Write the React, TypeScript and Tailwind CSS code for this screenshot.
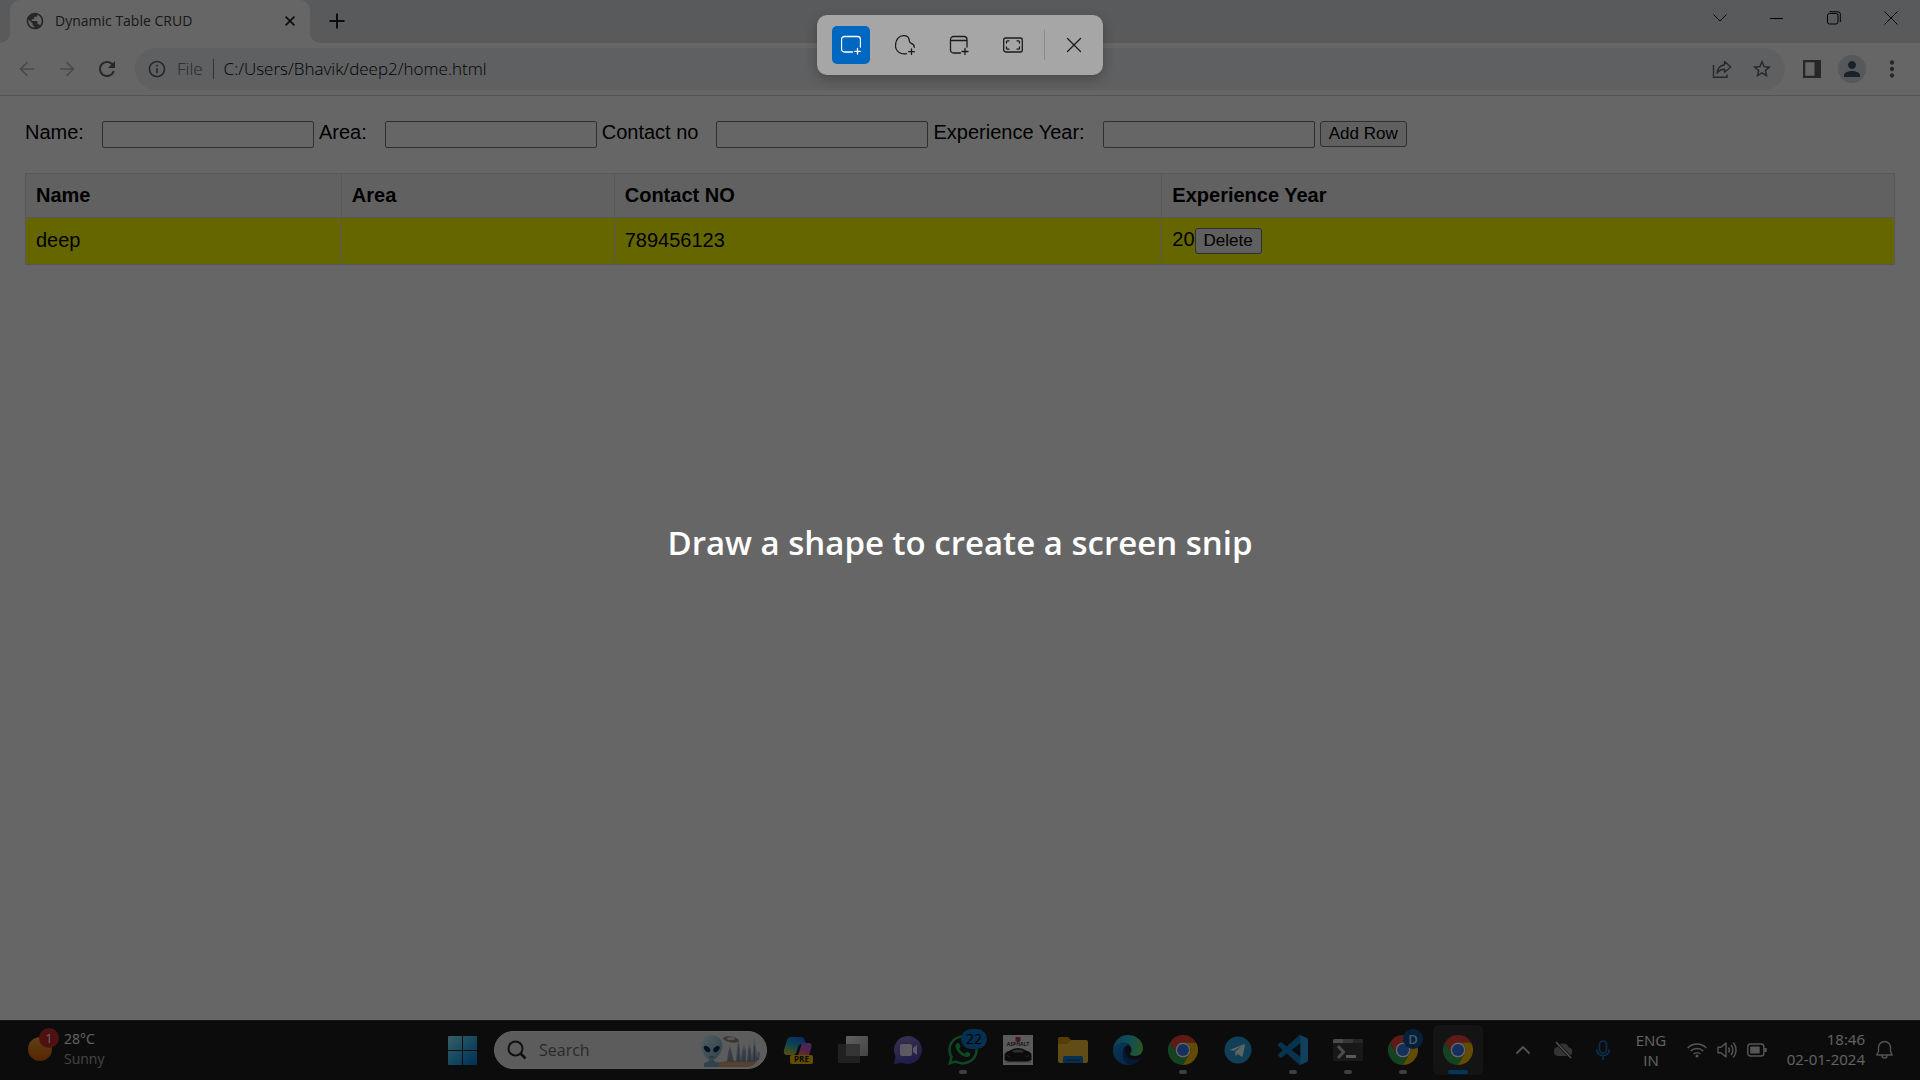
import React from "react";
import { ArrowLeft, ArrowRight, ChevronUp } from "lucide-react";
import { MdInfoOutline, MdMoreVert, MdPerson, MdPublic, MdRefresh, MdStarBorder } from "react-icons/md";
import { FaWhatsapp } from "react-icons/fa";

type Kids = { children?: React.ReactNode };

/* ---------- Browser chrome ---------- */

function WindowButton({ label, children }: Kids & { label: string }) {
  return (
    <button aria-label={label} className="flex h-9 w-[57px] items-center justify-center text-black">
      {children}
    </button>
  );
}

function TabStrip() {
  return (
    <header className="flex h-[43px] bg-white">
      <div className="w-[10px] rounded-br-[10px] bg-[#dee1e6]" />
      <div className="bg-[#dee1e6]">
        <div className="flex h-full w-[300px] items-center rounded-t-[10px] bg-white pr-3 pb-0.5 pl-[15px]">
          <MdPublic className="size-5 text-[#5f6368]" />
          <span className="ml-[10px] flex-1 text-[14px] leading-5 text-[#3c4043]">Dynamic Table CRUD</span>
          <button aria-label="Close tab" className="flex size-4 items-center justify-center text-[#202124]">
            <svg viewBox="0 0 10 10" className="size-[10px]" stroke="currentColor" strokeWidth="1.7">
              <path d="M.6.6l8.8 8.8M9.4.6L.6 9.4" />
            </svg>
          </button>
        </div>
      </div>
      <div className="flex flex-1 justify-between rounded-bl-[10px] bg-[#dee1e6] pr-px">
        <button aria-label="New tab" className="ml-[13px] flex h-[42px] w-7 items-center justify-center text-[#202124]">
          <svg viewBox="0 0 16 16" className="size-4" stroke="currentColor" strokeWidth="2">
            <path d="M8 .5v15M.5 8h15" />
          </svg>
        </button>
        <div className="flex">
          <WindowButton label="Search tabs">
            <svg viewBox="0 0 14 8" className="h-2 w-[14px]" fill="none" stroke="currentColor">
              <path d="M.5.5L7 7 13.5.5" />
            </svg>
          </WindowButton>
          <WindowButton label="Minimize">
            <span className="h-px w-[13px] bg-black" />
          </WindowButton>
          <WindowButton label="Restore">
            <svg viewBox="0 0 14 14" className="size-[14px]" fill="none" stroke="currentColor">
              <rect x=".5" y="2.5" width="10.5" height="10.5" rx="2" />
              <path d="M2.5.8H11a2.3 2.3 0 0 1 2.3 2.3V11" />
            </svg>
          </WindowButton>
          <WindowButton label="Close">
            <svg viewBox="0 0 14 14" className="size-[14px]" fill="none" stroke="currentColor">
              <path d="M.5.5l13 13M13.5.5l-13 13" />
            </svg>
          </WindowButton>
        </div>
      </div>
    </header>
  );
}

function ToolButton({ label, children }: Kids & { label: string }) {
  return (
    <button aria-label={label} className="flex h-10 w-10 items-center justify-center text-[#5f6368]">
      {children}
    </button>
  );
}

function Toolbar() {
  return (
    <nav className="flex h-[53px] items-center border-b border-[#d0d2d5] bg-white px-2">
      <div className="-ml-px flex">
        <ToolButton label="Back">
          <ArrowLeft className="size-[22px] text-[#b4b6b9]" strokeWidth={1.8} />
        </ToolButton>
        <ToolButton label="Forward">
          <ArrowRight className="size-[22px] text-[#b4b6b9]" strokeWidth={1.8} />
        </ToolButton>
        <ToolButton label="Reload">
          <MdRefresh className="size-6" />
        </ToolButton>
      </div>
      <div className="ml-2 flex h-[42px] flex-1 items-center rounded-full bg-[#edf0f4] pr-[3px] pl-3">
        <MdInfoOutline className="size-5 text-[#5f6368]" />
        <span className="ml-[10px] text-[17px] leading-6 font-light text-[#5f6368]">File</span>
        <span className="mx-[10px] h-5 w-px bg-[#777b80]" />
        <input
          aria-label="Address"
          defaultValue="C:/Users/Bhavik/deep2/home.html"
          className="min-w-0 flex-1 bg-transparent text-[17px] leading-6 font-light text-black outline-none"
        />
        <ToolButton label="Share">
          <svg viewBox="0 0 20 20" className="size-5" fill="none" stroke="currentColor" strokeWidth="1.4">
            <path d="M1.5 6v12.3H15V15.500" />
            <path d="M12.500 2.500L18.800 8l-6.300 5.300V10.300C9.200 10.300 7 11.500 5 14.300c.4-4.500 3-7.800 7.500-8.600z" strokeLinejoin="round" />
          </svg>
        </ToolButton>
        <ToolButton label="Bookmark">
          <MdStarBorder className="size-[22px]" />
        </ToolButton>
      </div>
      <div className="ml-[7px] flex">
        <ToolButton label="Side panel">
          <svg viewBox="0 0 18 18" className="size-[18px]" fill="currentColor">
            <path fillRule="evenodd" d="M0 0h18v18H0zM2.300 2.300v13.400h9.200V2.300z" />
          </svg>
        </ToolButton>
        <ToolButton label="Profile">
          <span className="flex size-7 items-center justify-center rounded-full bg-[#d8dce2]">
            <MdPerson className="size-6 text-[#45536a]" />
          </span>
        </ToolButton>
        <ToolButton label="Menu">
          <MdMoreVert className="size-[26px]" />
        </ToolButton>
      </div>
    </nav>
  );
}

/* ---------- Page ---------- */

function Field({ id, label }: { id: string; label: string }) {
  return (
    <div className="flex items-baseline gap-[18px]">
      <label htmlFor={id}>{label}</label>
      <input id={id} className="h-[27px] w-[212px] rounded-[2px] border border-[#767676] bg-white px-1 text-[17px]" />
    </div>
  );
}

function PageButton({ children }: Kids) {
  return (
    <button className="rounded-[3px] border border-[#767676] bg-[#efefef] px-2 text-[17px] leading-6 text-black">
      {children}
    </button>
  );
}

const columns = [
  { name: "Name", width: "w-[16.9%]" },
  { name: "Area", width: "w-[14.6%]" },
  { name: "Contact NO", width: "w-[29.3%]" },
  { name: "Experience Year", width: "w-[39.2%]" },
];

function Page() {
  return (
    <main className="flex-1 bg-white px-[25px] pt-6 font-['Liberation_Sans',Arial,sans-serif] text-[20px] leading-6 text-black">
      <form className="flex items-baseline gap-[5px]" onSubmit={(e) => e.preventDefault()}>
        <Field id="name" label="Name:" />
        <Field id="area" label="Area:" />
        <Field id="contact" label="Contact no" />
        <Field id="experience" label="Experience Year:" />
        <PageButton>Add Row</PageButton>
      </form>
      <table className="mt-[25px] w-full table-fixed border-collapse text-left">
        <thead>
          <tr className="bg-[#f2f2f2]">
            {columns.map((c) => (
              <th key={c.name} className={`border border-[#dddddd] px-[10px] pt-[9px] pb-[10px] leading-6 font-bold ${c.width}`}>
                {c.name}
              </th>
            ))}
          </tr>
        </thead>
        <tbody>
          <tr className="bg-[#ffff00]">
            <td className="h-[47px] border border-[#dddddd] px-[10px] pb-0.5">deep</td>
            <td className="border border-[#dddddd] px-[10px]" />
            <td className="border border-[#dddddd] px-[10px] pb-0.5">789456123</td>
            <td className="border border-[#dddddd] px-[10px]">
              <div className="flex items-baseline">
                20<PageButton>Delete</PageButton>
              </div>
            </td>
          </tr>
        </tbody>
      </table>
    </main>
  );
}

/* ---------- Taskbar icons ---------- */

function StartIcon() {
  return (
    <svg viewBox="0 0 29 29" className="size-[29px]">
      <defs>
        <linearGradient id="start" x1="0" y1="0" x2="1" y2="1">
          <stop offset="0" stopColor="#8eeaff" />
          <stop offset=".5" stopColor="#39b8ee" />
          <stop offset="1" stopColor="#0078d4" />
        </linearGradient>
      </defs>
      <path fill="url(#start)" d="M1 0h13v14H0V1a1 1 0 0 1 1-1zM15 0h13a1 1 0 0 1 1 1v13H15zM0 15h14v14H1a1 1 0 0 1-1-1zM15 15h14v13a1 1 0 0 1-1 1H15z" />
    </svg>
  );
}

function AlienArt() {
  return (
    <svg viewBox="0 0 62 36" className="h-9 w-[62px]">
      <defs>
        <linearGradient id="skin" x1="0" y1="0" x2="1" y2="1">
          <stop offset="0" stopColor="#d3eef5" />
          <stop offset="1" stopColor="#6fa3b8" />
        </linearGradient>
        <linearGradient id="tower" x1="0" y1="0" x2="0" y2="1">
          <stop offset="0" stopColor="#cdd6dc" />
          <stop offset="1" stopColor="#7d90a8" />
        </linearGradient>
      </defs>
      <path fill="#d1a277" d="M14 31q20-4 43-2-3 5-9 6H5z" />
      <path fill="url(#tower)" d="M27 30l1-9 2-8 2 8 2 9zM36 30l1-14 1.500-10L40 16l1 14zM41 30l1-12 2-6 2 6v12zM47 30l1-13 1.500-6L51 17l1 13zM52 30l1-15 1.500-10L56 15l1.500 14zM57 28l1-9 2 2-1 7z" />
      <path stroke="#536a85" strokeWidth=".5" d="M30 17v12M38.500 12v17M44 18v11M49.500 17v12M54.500 14v15" />
      <ellipse cx="31" cy="7.500" rx="8" ry="3" fill="#978b86" transform="rotate(10 31 8)" />
      <ellipse cx="31" cy="6.500" rx="4" ry="1.600" fill="#ded7d3" />
      <path fill="#7eabba" d="M9 24h5v5l5 2v4H4v-4l5-2z" />
      <path fill="url(#skin)" d="M11.500 3C4 3 1 8.500 1 14c0 6 6 14.500 10.500 14.500S22.500 20 22.500 14C22.500 8.500 19 3 11.500 3z" />
      <ellipse cx="7" cy="17" rx="2.400" ry="3.800" fill="#142c50" transform="rotate(-45 7 17)" />
      <ellipse cx="16.500" cy="17" rx="2.400" ry="3.800" fill="#142c50" transform="rotate(45 16.500 17)" />
      <path d="M9.500 25h4" stroke="#476b7a" />
    </svg>
  );
}

function CopilotIcon() {
  return (
    <svg viewBox="0 0 30 30" className="size-[30px]">
      <defs>
        <linearGradient id="cpA" x1=".6" y1="0" x2=".2" y2="1">
          <stop offset="0" stopColor="#1a72e8" />
          <stop offset=".5" stopColor="#22b0c9" />
          <stop offset=".8" stopColor="#9bc04a" />
          <stop offset="1" stopColor="#f0b429" />
        </linearGradient>
        <linearGradient id="cpB" x1=".6" y1="0" x2=".3" y2="1">
          <stop offset="0" stopColor="#a560f5" />
          <stop offset=".6" stopColor="#e0559d" />
          <stop offset="1" stopColor="#f58c50" />
        </linearGradient>
      </defs>
      <path fill="url(#cpA)" d="M8 2h10q3 0 4 4l1 3h-4q-3 0-4 3l-2 6q-1 2-3 2H4q-4 0-3-5L4 5q1-3 4-3z" />
      <path fill="url(#cpB)" d="M19 8h7q3 0 2.500 4l-2 7q-1 3-4 3H13q2-1 3-4l2-7q0-2 1-3z" />
      <rect x="7" y="20" width="23" height="9" rx="2" fill="#f5c400" />
      <text x="18.500" y="27.400" textAnchor="middle" fontSize="8" fontWeight="700" fill="#181818" fontFamily="Open Sans">PRE</text>
    </svg>
  );
}

function TaskViewIcon() {
  return (
    <svg viewBox="0 0 30 30" className="size-[30px]">
      <defs>
        <linearGradient id="tv" x1="0" y1="0" x2="1" y2="1">
          <stop offset="0" stopColor="#f0f0f0" />
          <stop offset="1" stopColor="#a9a9a9" />
        </linearGradient>
      </defs>
      <rect x="8" y="1" width="22" height="20" rx="1" fill="url(#tv)" />
      <rect y="9" width="22" height="19" rx="1" fill="#545454" />
      <path d="M8 9h14v12H8z" fill="#858585" />
    </svg>
  );
}

function ChatIcon() {
  return (
    <svg viewBox="0 0 30 30" className="size-[30px]">
      <defs>
        <linearGradient id="chat" x1=".2" y1="0" x2=".6" y2="1">
          <stop offset="0" stopColor="#8f7ac8" />
          <stop offset="1" stopColor="#4a45b8" />
        </linearGradient>
      </defs>
      <path fill="url(#chat)" d="M15 1a14 14 0 1 1-6 26.700L1 29l1.500-7.500A14 14 0 0 1 15 1z" />
      <rect x="7" y="9" width="12" height="12" rx="2" fill="#e6e2f0" />
      <path fill="#e6e2f0" d="M20 13l4-3v10l-4-3z" />
    </svg>
  );
}

function AsphaltIcon() {
  return (
    <svg viewBox="0 0 30 30" className="size-[30px]">
      <path fill="#e4e4e4" d="M0 0h30v30H0z" />
      <path fill="#ad3551" d="M12.500 2h5v4L15 7.500 12.500 6z" />
      <text x="15" y="11.300" textAnchor="middle" fontSize="5" fontWeight="700" fill="#333" fontFamily="Open Sans">ASPHALT</text>
      <path fill="#bcbcbc" d="M2 22h26v6H2z" />
      <path fill="#1d1d1d" d="M1.500 19.500q1-3 5.500-4 3-2.500 8-2.500t8 2.500q4.500 1 5.500 4v5.500l-4 1.500h-19l-4-1.500z" />
      <path fill="#777" d="M9 16q6-3 12 0l-2 1.500h-8zM3 20l5 1.500H5zM27 20l-5 1.500h3z" />
    </svg>
  );
}

function FolderIcon() {
  return (
    <svg viewBox="0 0 30 30" className="size-[30px]">
      <path fill="#d99a0b" d="M0 4q0-2 2-2h8l3 3h13v6H0z" />
      <path fill="#f3bd35" d="M0 9h9l4-4h15q2 0 2 2v19q0 2-2 2H2q-2 0-2-2z" />
      <path fill="#0f76c8" d="M5 28v-5q0-2 2-2h16q2 0 2 2v5z" />
      <path stroke="#0a4c8c" strokeWidth="1.200" d="M8 25h14" />
    </svg>
  );
}

function EdgeIcon() {
  return (
    <svg viewBox="0 0 30 30" className="size-[30px]">
      <defs>
        <linearGradient id="edgeTop" x1="0" y1=".4" x2="1" y2=".5">
          <stop offset="0" stopColor="#1f9fe0" />
          <stop offset=".55" stopColor="#2fc3d2" />
          <stop offset="1" stopColor="#6bdc55" />
        </linearGradient>
        <linearGradient id="edgeLow" x1="0" y1="0" x2="1" y2="1">
          <stop offset="0" stopColor="#1b8bdb" />
          <stop offset="1" stopColor="#0b4f9c" />
        </linearGradient>
      </defs>
      <path fill="url(#edgeTop)" d="M0 14C1 6 7 0 15 0c9 0 15 6.500 15 13 0 5-3.500 8-8 8-3 0-5-1-5-2.300 0-.8 1.500-1.500 1.500-4C18.500 11 15 8.500 11 8.500 5.500 8.500 1.500 11 0 14z" />
      <path fill="url(#edgeLow)" d="M0 15c1-4.500 6-7.500 11-7.500 3 0 5 1 6 2.500-4-.5-7 2.500-7 7 0 5 5 9 10 9 3 0 5-1 7-2.300C24.500 27.500 20 30 15 30 7 30-.5 23.500 0 15z" />
      <path fill="#0c3f86" d="M12.500 11.800C9 14 8.500 22 12 26c1.500 2 3.500 3.500 5 3.900 4-.5 8-3 10-6.600-2 1.200-4 1.500-6 1.200-5-.5-9-4-9-8.500 0-1.500.2-3 .5-4.200z" />
    </svg>
  );
}

function ChromeIcon() {
  return (
    <svg viewBox="0 0 48 48" className="size-[30px]">
      <path fill="#ea4335" d="M3.200 12A24 24 0 0 1 44.800 12H24A12 12 0 0 0 13.600 30z" />
      <path fill="#34a853" d="M3.200 12A24 24 0 0 0 24 48L34.400 30A12 12 0 0 1 13.600 30z" />
      <path fill="#fbbc05" d="M44.800 12A24 24 0 0 1 24 48L34.400 30A12 12 0 0 0 24 12z" />
      <circle cx="24" cy="24" r="12" fill="#fff" />
      <circle cx="24" cy="24" r="9.500" fill="#3578e5" />
    </svg>
  );
}

function TelegramIcon() {
  return (
    <svg viewBox="0 0 28 28" className="size-7">
      <circle cx="14" cy="14" r="13.500" fill="#2aa1da" />
      <path fill="#f1f7fa" d="M6 13.700L20 8.200q1.200-.3 1 1L18.700 20q-.4 1.200-1.500.5l-3.500-2.600-1.800 1.700q-.5.400-.6-.2l-.2-3.500 6.500-5.900-8 5-3.500-1.100q-.8-.1-.1-.2z" />
    </svg>
  );
}

function VsCodeIcon() {
  return (
    <svg viewBox="0 0 24 24" className="size-[30px]">
      <path fill="#0f7fc8" d="M23.150 2.587L18.210.21a1.494 1.494 0 0 0-1.705.29l-9.460 8.630-4.120-3.128a.999.999 0 0 0-1.276.057L.327 7.261A1 1 0 0 0 .326 8.740L3.899 12 .326 15.260a1 1 0 0 0 .001 1.479L1.650 17.940a.999.999 0 0 0 1.276.057l4.120-3.128 9.460 8.630a1.492 1.492 0 0 0 1.704.29l4.942-2.377A1.500 1.500 0 0 0 24 20.060V3.939a1.500 1.500 0 0 0-.85-1.352zm-5.146 14.861L10.826 12l7.178-5.448v10.896z" />
      <path fill="#2b9fe6" d="M18.004.2l5.146 2.387A1.500 1.500 0 0 1 24 3.939V20.060a1.500 1.500 0 0 1-.85 1.352L18.004 23.800z" />
    </svg>
  );
}

function TerminalIcon() {
  return (
    <svg viewBox="0 0 30 30" className="size-[30px]">
      <rect y="4" width="30" height="22" rx="1.500" fill="#3e3e3e" />
      <path fill="#bdbdbd" d="M1.500 4H10v4H0V5.500Q0 4 1.500 4z" />
      <path fill="#8a8a8a" d="M10 4h10v4H10z" />
      <path fill="#636363" d="M20 4h8.500Q30 4 30 5.500V8H20z" />
      <path d="M5 11l5.500 6L5 23" fill="none" stroke="#bdbdbd" strokeWidth="3" />
      <path fill="#dedede" d="M13 20h10v3H13z" />
    </svg>
  );
}

function TaskItem({ label, state, badge, children }: Kids & { label: string; state?: "open" | "active"; badge?: React.ReactNode }) {
  return (
    <button
      aria-label={label}
      className={`relative flex h-[50px] w-[50px] items-center justify-center rounded-md ${state === "active" ? "bg-[#343434]" : ""}`}
    >
      {children}
      {badge}
      {state === "open" && <span className="absolute bottom-px h-1 w-2 rounded-full bg-[#9e9e9e]" />}
      {state === "active" && <span className="absolute bottom-px h-1 w-5 rounded-full bg-[#0a84e8]" />}
    </button>
  );
}

function Taskbar() {
  return (
    <footer className="grid h-[60px] grid-cols-[1fr_auto_1fr] items-center bg-[#202020] text-[15px] leading-5 text-[#f5f5f5] inset-shadow-[0_1px_0_#3a3a3a]">
      <button className="flex items-center pb-0.5 pl-7 text-left">
        <span className="relative size-6 rounded-full bg-gradient-to-b from-[#e8a22e] to-[#d95c08]">
          <span className="absolute -top-[9px] left-[11px] flex size-5 items-center justify-center rounded-full bg-[#c42b2b] text-[13px] text-white">
            1
          </span>
        </span>
        <span className="ml-3 text-[14px]">
          28°C
          <br />
          <span className="text-[#aaaaaa]">Sunny</span>
        </span>
      </button>

      <div className="flex items-center">
        <TaskItem label="Start">
          <StartIcon />
        </TaskItem>
        <label className="mr-[6px] ml-[7px] flex h-[38px] w-[273px] items-center rounded-full border border-[#f5f5f5] bg-[#e6e6e6] pr-1 pl-3">
          <svg viewBox="0 0 20 20" className="size-5" fill="none" stroke="#2a2a2a">
            <circle cx="8.500" cy="8.500" r="7" strokeWidth="2" />
            <path d="M13.500 13.500l5 5" strokeWidth="2.600" />
          </svg>
          <input
            aria-label="Search"
            placeholder="Search"
            className="ml-3 min-w-0 flex-1 bg-transparent text-[16px] outline-none placeholder:text-[#6a6a6a]"
          />
          <AlienArt />
        </label>
        <div className="flex gap-[5px]">
          <TaskItem label="Copilot"><CopilotIcon /></TaskItem>
          <TaskItem label="Task view"><TaskViewIcon /></TaskItem>
          <TaskItem label="Chat"><ChatIcon /></TaskItem>
          <TaskItem
            label="WhatsApp"
            state="open"
            badge={
              <span className="absolute top-1 left-[23px] flex h-5 w-[26px] items-center justify-center rounded-full bg-[#0a78cc] text-[14px] text-black">
                22
              </span>
            }
          >
            <FaWhatsapp className="size-[34px] text-[#25b457]" />
          </TaskItem>
          <TaskItem label="Asphalt"><AsphaltIcon /></TaskItem>
          <TaskItem label="File Explorer"><FolderIcon /></TaskItem>
          <TaskItem label="Edge"><EdgeIcon /></TaskItem>
          <TaskItem label="Chrome" state="open"><ChromeIcon /></TaskItem>
          <TaskItem label="Telegram"><TelegramIcon /></TaskItem>
          <TaskItem label="Visual Studio Code" state="open"><VsCodeIcon /></TaskItem>
          <TaskItem label="Terminal" state="open"><TerminalIcon /></TaskItem>
          <TaskItem
            label="Chrome profile D"
            state="open"
            badge={
              <span className="absolute top-1 left-[25px] flex size-5 items-center justify-center rounded-full bg-[#09539a] text-[13px] font-semibold text-[#c4dcf2]">
                D
              </span>
            }
          >
            <ChromeIcon />
          </TaskItem>
          <TaskItem label="Chrome window" state="active"><ChromeIcon /></TaskItem>
        </div>
      </div>

      <div className="flex items-center justify-end pr-[27px]">
        <button aria-label="Hidden icons" className="flex w-10 justify-center">
          <ChevronUp className="h-6 w-[26px]" strokeWidth={1.8} color="#cfcfcf" />
        </button>
        <button aria-label="Cloud sync" className="flex w-10 justify-center">
          <svg viewBox="0 0 20 18" className="h-[18px] w-5">
            <path fill="#858585" d="M5 15a4.500 4.500 0 0 1-.5-8.900 6 6 0 0 1 11.200.4A4.300 4.300 0 0 1 15.500 15z" />
            <path stroke="#202020" strokeWidth="3" d="M3 1l15 16" />
            <path stroke="#d0d0d0" strokeWidth="1.400" d="M3 1l15 16" />
          </svg>
        </button>
        <button aria-label="Microphone" className="flex w-10 justify-center">
          <svg viewBox="0 0 14 20" className="h-5 w-[14px]" fill="none" stroke="#1673c4" strokeWidth="1.700">
            <rect x="3.500" y="1" width="7" height="12" rx="3.500" />
            <path d="M.8 9.500a6.200 6.200 0 0 0 12.400 0M7 16v4" />
          </svg>
        </button>
        <button className="ml-3 w-[32px] text-center text-[15px]">
          ENG
          <br />
          IN
        </button>
        <button aria-label="Network, sound and battery" className="ml-5 flex gap-[10px] text-[#d6d6d6]">
          <svg viewBox="0 0 20 16" className="h-5 w-5" fill="none" stroke="currentColor" strokeWidth="1.500">
            <path d="M.7 6a13 13 0 0 1 18.600 0M3.700 9a9 9 0 0 1 12.600 0M6.600 12a5 5 0 0 1 6.800 0" />
            <circle cx="10" cy="14" r="1.500" fill="currentColor" stroke="none" />
          </svg>
          <svg viewBox="0 0 20 20" className="size-5" fill="none" stroke="currentColor" strokeWidth="1.400" strokeLinejoin="round">
            <path d="M1 7.200h3L9 3v14l-5-4.200H1zM11.500 7.500a4 4 0 0 1 0 5M14 5a7.500 7.500 0 0 1 0 10M16.300 2.500a11.500 11.500 0 0 1 0 15" />
          </svg>
          <svg viewBox="0 0 20 20" className="size-5" fill="none" stroke="currentColor" strokeWidth="1.400">
            <rect x=".8" y="4" width="16" height="12" rx="2.500" />
            <rect x="3.200" y="6.400" width="9.500" height="7.200" rx=".8" fill="currentColor" stroke="none" />
            <path d="M18.500 8v4" strokeWidth="2.400" />
          </svg>
        </button>
        <button className="ml-[18px] w-20 pb-0.5 text-right text-[15px] whitespace-nowrap">
          18:46
          <br />
          02-01-2024
        </button>
        <button aria-label="Notifications" className="ml-[11px]">
          <svg viewBox="0 0 17 20" className="h-5 w-[17px]" fill="none" stroke="#cfcfcf" strokeWidth="1.400" strokeLinejoin="round">
            <path d="M2.500 11.500V7.500a6 6 0 0 1 12 0v4l1.700 3.500H.8zM6 15.500a2.500 2.500 0 0 0 5 0" />
          </svg>
        </button>
      </div>
    </footer>
  );
}

/* ---------- Snipping layer ---------- */

function SnipButton({ label, selected, children }: Kids & { label: string; selected?: boolean }) {
  return (
    <button
      aria-label={label}
      className={`flex size-[38px] items-center justify-center rounded-[5px] ${selected ? "bg-[#0067c0] text-white" : "text-[#1b1b1b]"}`}
    >
      <svg viewBox="0 0 20 20" className="size-5" fill="none" stroke="currentColor" strokeWidth="1.300" strokeLinecap="round">
        {children}
      </svg>
    </button>
  );
}

function SnipLayer() {
  return (
    <div className="absolute inset-0 flex flex-col items-center bg-black/60">
      <div role="toolbar" className="mt-[15px] flex h-[60px] items-center rounded-[10px] bg-[#a6a6a6] pr-[10px] pl-[15px] shadow-[0_4px_12px_rgba(0,0,0,0.25)]">
        <div className="flex gap-4">
          <SnipButton label="Rectangular snip" selected>
            <path d="M11.500 17H3.500a3 3 0 0 1-3-3V4.500a3 3 0 0 1 3-3h13a3 3 0 0 1 3 3v7.500M16.500 13.500v5.500M13.700 16.300h5.600" />
          </SnipButton>
          <SnipButton label="Freeform snip">
            <path d="M11.500 18.700c-6 1-11-2.200-11-8C.5 4.500 4 .7 8.500.7c3.800 0 5.700 2.300 5.800 5 .1 1.600.5 2 2 2.600 2 .8 3 2 3 4M16.500 14v5.500M13.700 16.700h5.600" />
          </SnipButton>
          <SnipButton label="Window snip">
            <path d="M11.500 18H4.500a3 3 0 0 1-3-3V4.500a3 3 0 0 1 3-3h10.500a3 3 0 0 1 3 3v7.500M1.500 5.500H18M16 13.500V19.500M13 16.500h6" />
          </SnipButton>
          <SnipButton label="Full-screen snip">
            <rect x=".7" y="3" width="18.600" height="14" rx="2" />
            <path d="M3.500 8V6.800q0-1 1-1H6M14 5.800h1.500q1 0 1 1V8M16.500 12v1.200q0 1-1 1H14M6 14.200H4.500q-1 0-1-1V12" />
          </SnipButton>
        </div>
        <div className="mr-[10px] ml-3 h-[30px] w-px bg-[#8c8c8c]" />
        <SnipButton label="Close">
          <path d="M3.500 3.500l13 13M16.500 3.500l-13 13" />
        </SnipButton>
      </div>
      <p className="flex flex-1 items-center pb-[70px] text-[33px] font-semibold text-white">
        Draw a shape to create a screen snip
      </p>
    </div>
  );
}

export default function App() {
  return (
    <div className="relative flex min-h-screen flex-col font-['Open_Sans','Noto_Sans',sans-serif]">
      <TabStrip />
      <Toolbar />
      <Page />
      <Taskbar />
      <SnipLayer />
    </div>
  );
}
